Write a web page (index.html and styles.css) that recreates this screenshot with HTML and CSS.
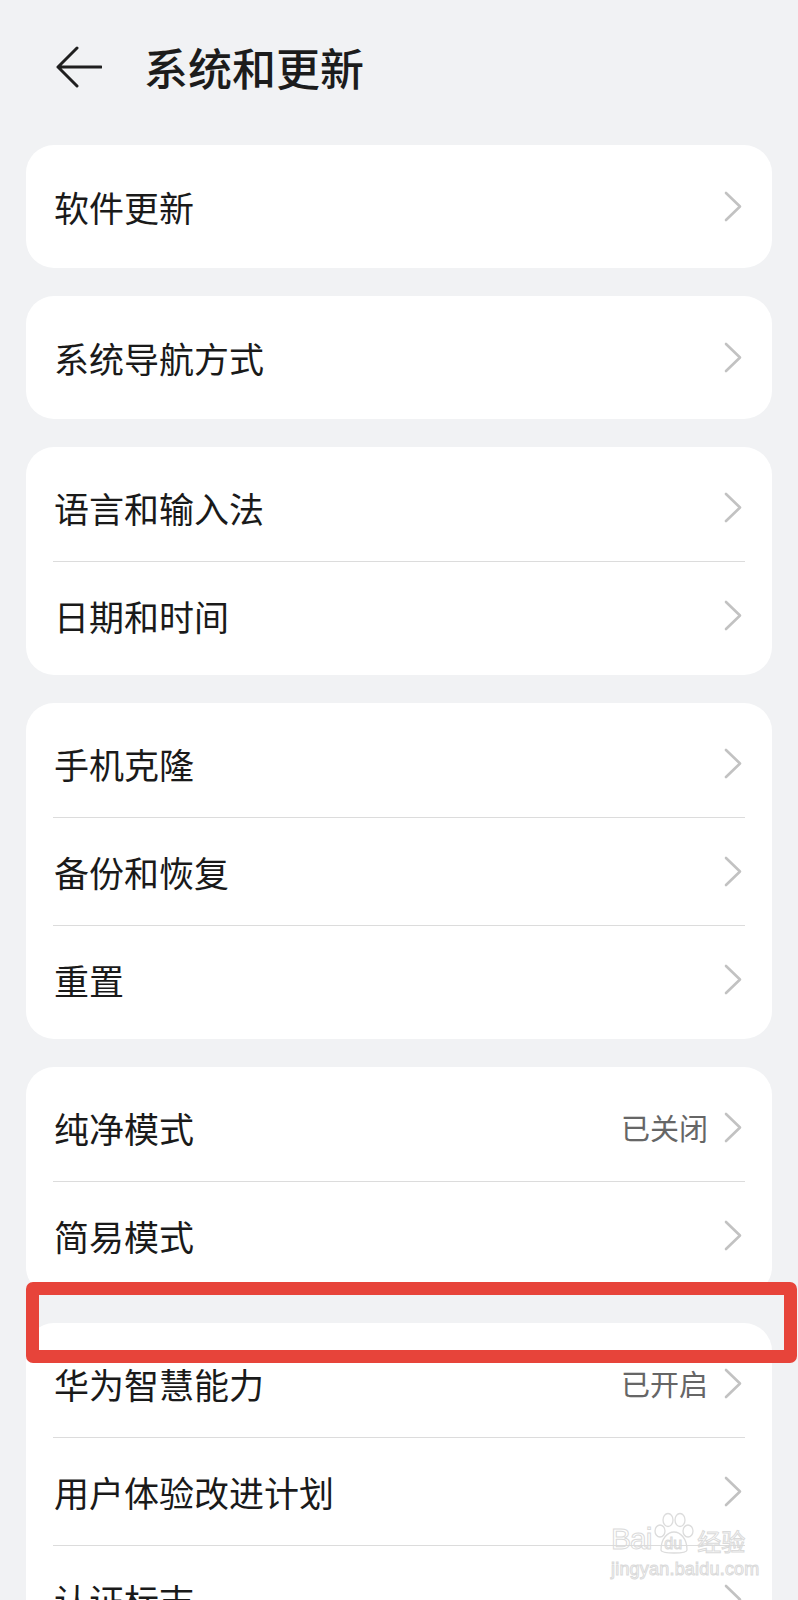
FILE: index.html
```html
<!DOCTYPE html>
<html lang="zh-CN">
<head>
<meta charset="utf-8">
<title>系统和更新</title>
<link rel="stylesheet" href="styles.css">
</head>
<body>
<div class="page">
  <header class="header">
    <svg class="back" width="46" height="42" viewBox="0 0 46 42">
      <path d="M21 2 L2 21 L21 40 M2 21 L45 21" fill="none" stroke="#1f1f1f" stroke-width="3" stroke-linecap="round" stroke-linejoin="round"/>
    </svg>
    <h1 class="title">系统和更新</h1>
  </header>

  <main class="list">
    <section class="card">
      <div class="row row-single"><span class="label">软件更新</span><span class="right"><svg class="chev" width="18" height="31" viewBox="0 0 18 31"><path d="M2 2 L16 15.5 L2 29" fill="none" stroke="#c2c2c2" stroke-width="2.6" stroke-linecap="round" stroke-linejoin="round"/></svg></span></div>
    </section>

    <section class="card">
      <div class="row row-single"><span class="label">系统导航方式</span><span class="right"><svg class="chev" width="18" height="31" viewBox="0 0 18 31"><path d="M2 2 L16 15.5 L2 29" fill="none" stroke="#c2c2c2" stroke-width="2.6" stroke-linecap="round" stroke-linejoin="round"/></svg></span></div>
    </section>

    <section class="card">
      <div class="row"><span class="label">语言和输入法</span><span class="right"><svg class="chev" width="18" height="31" viewBox="0 0 18 31"><path d="M2 2 L16 15.5 L2 29" fill="none" stroke="#c2c2c2" stroke-width="2.6" stroke-linecap="round" stroke-linejoin="round"/></svg></span></div>
      <div class="row"><span class="label">日期和时间</span><span class="right"><svg class="chev" width="18" height="31" viewBox="0 0 18 31"><path d="M2 2 L16 15.5 L2 29" fill="none" stroke="#c2c2c2" stroke-width="2.6" stroke-linecap="round" stroke-linejoin="round"/></svg></span></div>
    </section>

    <section class="card">
      <div class="row"><span class="label">手机克隆</span><span class="right"><svg class="chev" width="18" height="31" viewBox="0 0 18 31"><path d="M2 2 L16 15.5 L2 29" fill="none" stroke="#c2c2c2" stroke-width="2.6" stroke-linecap="round" stroke-linejoin="round"/></svg></span></div>
      <div class="row"><span class="label">备份和恢复</span><span class="right"><svg class="chev" width="18" height="31" viewBox="0 0 18 31"><path d="M2 2 L16 15.5 L2 29" fill="none" stroke="#c2c2c2" stroke-width="2.6" stroke-linecap="round" stroke-linejoin="round"/></svg></span></div>
      <div class="row"><span class="label">重置</span><span class="right"><svg class="chev" width="18" height="31" viewBox="0 0 18 31"><path d="M2 2 L16 15.5 L2 29" fill="none" stroke="#c2c2c2" stroke-width="2.6" stroke-linecap="round" stroke-linejoin="round"/></svg></span></div>
    </section>

    <section class="card">
      <div class="row"><span class="label">纯净模式</span><span class="right"><span class="value">已关闭</span><svg class="chev" width="18" height="31" viewBox="0 0 18 31"><path d="M2 2 L16 15.5 L2 29" fill="none" stroke="#c2c2c2" stroke-width="2.6" stroke-linecap="round" stroke-linejoin="round"/></svg></span></div>
      <div class="row"><span class="label">简易模式</span><span class="right"><svg class="chev" width="18" height="31" viewBox="0 0 18 31"><path d="M2 2 L16 15.5 L2 29" fill="none" stroke="#c2c2c2" stroke-width="2.6" stroke-linecap="round" stroke-linejoin="round"/></svg></span></div>
    </section>

    <section class="card">
      <div class="row"><span class="label">华为智慧能力</span><span class="right"><span class="value">已开启</span><svg class="chev" width="18" height="31" viewBox="0 0 18 31"><path d="M2 2 L16 15.5 L2 29" fill="none" stroke="#c2c2c2" stroke-width="2.6" stroke-linecap="round" stroke-linejoin="round"/></svg></span></div>
      <div class="row"><span class="label">用户体验改进计划</span><span class="right"><svg class="chev" width="18" height="31" viewBox="0 0 18 31"><path d="M2 2 L16 15.5 L2 29" fill="none" stroke="#c2c2c2" stroke-width="2.6" stroke-linecap="round" stroke-linejoin="round"/></svg></span></div>
      <div class="row"><span class="label">认证标志</span><span class="right"><svg class="chev" width="18" height="31" viewBox="0 0 18 31"><path d="M2 2 L16 15.5 L2 29" fill="none" stroke="#c2c2c2" stroke-width="2.6" stroke-linecap="round" stroke-linejoin="round"/></svg></span></div>
    </section>
  </main>

  <div class="highlight"></div>

  <div class="watermark">
    <div class="wm-top">
      <span class="wm-bai">Bai</span>
      <span class="wm-paw">
        <svg width="44" height="44" viewBox="0 0 44 44">
          <g fill="none" stroke="#dcdcdc" stroke-width="1.3">
            <ellipse cx="8" cy="19" rx="5" ry="6"/>
            <ellipse cx="16" cy="8" rx="5" ry="6.5"/>
            <ellipse cx="28" cy="8" rx="5" ry="6.5"/>
            <ellipse cx="36" cy="19" rx="5" ry="6"/>
            <path d="M9 38 C9 26 16 20 22 20 C28 20 35 26 35 38 C35 42 9 42 9 38 Z"/>
          </g>
        </svg>
        <span class="wm-du">du</span>
      </span>
      <span class="wm-cn">经验</span>
    </div>
    <div class="wm-url">jingyan.baidu.com</div>
  </div>
</div>
</body>
</html>
```

FILE: styles.css
```css
html, body {
  margin: 0;
  padding: 0;
}

body {
  background: #f1f2f4;
  font-family: "Noto Sans CJK SC", "Noto Sans", sans-serif;
  color: #1a1a1a;
}

.page {
  position: relative;
  width: 798px;
  min-height: 1600px;
}

.header {
  height: 134px;
  display: flex;
  align-items: center;
  padding-left: 56px;
  box-sizing: border-box;
}

.back {
  display: block;
  margin-right: 42px;
  flex: none;
}

.title {
  margin: 0;
  font-size: 44px;
  font-weight: 500;
  line-height: 1;
  color: #1c1c1c;
}

.list {
  display: flex;
  flex-direction: column;
  gap: 28px;
  padding: 11px 26px 40px;
}

.card {
  background: #ffffff;
  border-radius: 28px;
  padding: 6px 27px;
}

.row {
  height: 108px;
  display: flex;
  align-items: center;
  justify-content: space-between;
  box-sizing: border-box;
}

.row-single {
  height: 111px;
}

.row + .row {
  border-top: 1px solid #dcdcdc;
}

.label {
  font-size: 35px;
  line-height: 1;
  color: #1a1a1a;
  padding-left: 1px;
}

.right {
  display: flex;
  align-items: center;
  padding-right: 3px;
}

.value {
  font-size: 29px;
  line-height: 1;
  color: #666666;
  margin-right: 16px;
}

.chev {
  display: block;
}

.highlight {
  position: absolute;
  left: 26px;
  top: 1282px;
  width: 771px;
  height: 81px;
  box-sizing: border-box;
  border: 13px solid #e7443a;
  border-radius: 7px;
}

.watermark {
  position: absolute;
  left: 611px;
  top: 1512px;
  width: 150px;
  display: flex;
  flex-direction: column;
  align-items: flex-start;
  pointer-events: none;
}

.wm-top {
  display: flex;
  align-items: flex-end;
}

.wm-bai,
.wm-cn,
.wm-du,
.wm-url {
  color: transparent;
  -webkit-text-stroke: 1px #dadada;
  font-family: "Liberation Sans", "Noto Sans CJK SC", sans-serif;
  line-height: 1;
}

.wm-bai {
  font-size: 30px;
  letter-spacing: -1px;
  margin-bottom: 2px;
}

.wm-paw {
  position: relative;
  width: 44px;
  height: 44px;
  margin: 0 1px;
}

.wm-paw svg {
  display: block;
}

.wm-du {
  position: absolute;
  left: 12px;
  top: 24px;
  font-size: 16px;
}

.wm-cn {
  font-family: "Noto Sans CJK SC", sans-serif;
  font-size: 24px;
  margin-bottom: 3px;
}

.wm-url {
  font-size: 18px;
  margin-top: 4px;
  letter-spacing: 0.2px;
}
```
